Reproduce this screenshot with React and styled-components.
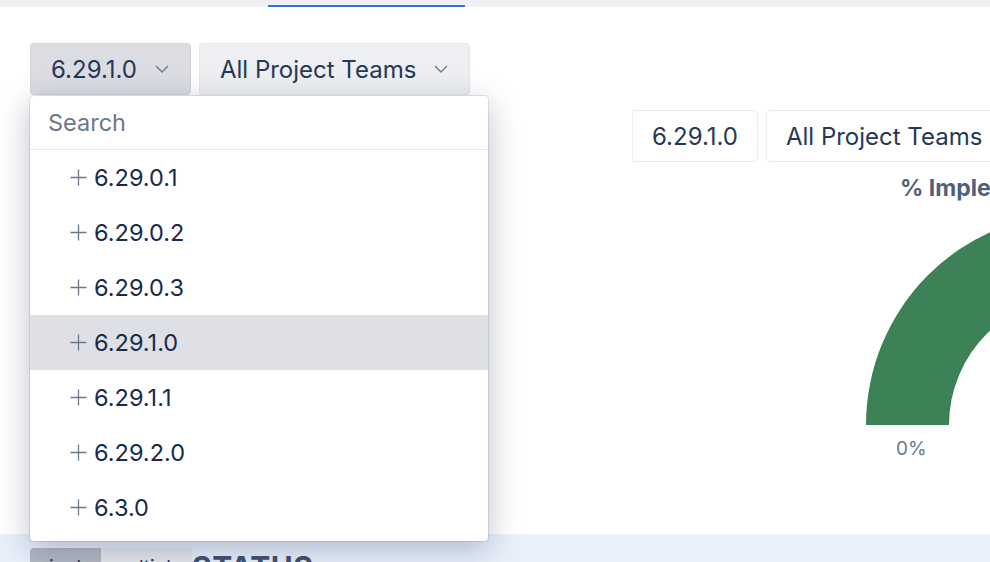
import React from "react";
import styled, { createGlobalStyle } from "styled-components";

const GlobalStyle = createGlobalStyle`
  html, body {
    margin: 0;
    padding: 0;
    background: #ffffff;
  }
  body {
    font-family: Inter, "Noto Sans", "Liberation Sans", sans-serif;
    color: #172b4d;
  }
`;

const Page = styled.div`
  width: 990px;
  height: 562px;
  overflow: hidden;
  position: relative;
  display: flex;
  flex-direction: column;
`;

const TabStrip = styled.div`
  height: 7px;
  flex: none;
  background: #f0f1f4;
  display: flex;
  align-items: flex-end;
  padding-left: 268px;
`;

const TabLine = styled.div`
  width: 197px;
  height: 2px;
  background: #2f6fe8;
`;

const Main = styled.div`
  height: 527px;
  flex: none;
  display: flex;
`;

const LeftColumn = styled.div`
  width: 632px;
  flex: none;
  padding: 36px 0 0 30px;
  box-sizing: border-box;
  position: relative;
  z-index: 2;
`;

const FilterRow = styled.div`
  display: flex;
  gap: 8px;
  position: relative;
`;

const SelectButton = styled.button`
  height: 52px;
  padding: 0 21px 0 20px;
  border: 1px solid ${(p) => (p.$open ? "#d3d5db" : "#e3e5ea")};
  border-radius: 4px;
  background: ${(p) => (p.$open ? "#dcdde2" : "#eeeff2")};
  color: #253858;
  font-family: inherit;
  font-size: 24px;
  display: flex;
  align-items: center;
  gap: 18px;
  box-sizing: border-box;
  white-space: nowrap;
`;

const Chevron = () => (
  <svg width="14" height="8" viewBox="0 0 14 8" fill="none">
    <path d="M1 1l6 6 6-6" stroke="#6b778c" strokeWidth="1.3" />
  </svg>
);

const Dropdown = styled.div`
  position: absolute;
  left: 0;
  top: 53px;
  width: 458px;
  height: 445px;
  background: #ffffff;
  border-radius: 4px;
  box-shadow: 0 0 0 1px rgba(9, 30, 66, 0.1), 0 8px 32px rgba(9, 30, 66, 0.28);
  box-sizing: border-box;
  padding-bottom: 6px;
  display: flex;
  flex-direction: column;
`;

const SearchRow = styled.div`
  height: 54px;
  flex: none;
  border-bottom: 1px solid #e6e8ec;
  box-sizing: border-box;
  padding-left: 18px;
  display: flex;
  align-items: center;
  color: #6b778c;
  font-size: 23.5px;
`;

const Item = styled.div`
  height: 55px;
  flex: none;
  display: flex;
  align-items: center;
  gap: 7px;
  padding-left: 40px;
  font-size: 23.5px;
  color: #172b4d;
  background: ${(p) => (p.$active ? "#dfe0e5" : "transparent")};
`;

const Plus = () => (
  <svg width="17" height="17" viewBox="0 0 17 17" fill="none">
    <path d="M8.5 0.5v16M0.5 8.5h16" stroke="#6b778c" strokeWidth="1.3" />
  </svg>
);

const RightColumn = styled.div`
  flex: 1;
  padding-top: 103px;
  overflow: hidden;
  position: relative;
`;

const ChipRow = styled.div`
  display: flex;
  gap: 8px;
  width: 600px;
`;

const Chip = styled.div`
  height: 52px;
  padding: 0 19px;
  border: 1px solid #ebecf0;
  border-radius: 4px;
  background: #ffffff;
  color: #253858;
  font-size: 24px;
  display: flex;
  align-items: center;
  box-sizing: border-box;
  white-space: nowrap;
`;

const ChartTitle = styled.div`
  margin: 13px 0 0 268px;
  font-size: 23px;
  font-weight: 700;
  color: #505f79;
  white-space: nowrap;
  line-height: 26px;
`;

const Gauge = styled.svg`
  display: block;
  margin: 12px 0 0 234px;
`;

const GaugeLabel = styled.div`
  margin: 12px 0 0 264px;
  font-size: 19px;
  color: #6b778c;
`;

const StatusBand = styled.div`
  flex: 1;
  background: #e9f0fb;
  padding: 14px 0 0 30px;
  display: flex;
  align-items: flex-start;
`;

const Toggle = styled.div`
  display: flex;
  border-radius: 4px;
  overflow: hidden;
`;

const ToggleButton = styled.div`
  width: ${(p) => p.$w}px;
  height: 36px;
  background: ${(p) => (p.$active ? "#b3b9c4" : "#e6e8ec")};
  color: #253858;
  font-size: 19px;
  display: flex;
  align-items: center;
  justify-content: center;
  padding-top: 2px;
  box-sizing: border-box;
`;

const StatusTitle = styled.div`
  font-size: 30px;
  font-weight: 700;
  color: #42526e;
  letter-spacing: 0.5px;
  margin-top: 1px;
`;

const versions = ["6.29.0.1", "6.29.0.2", "6.29.0.3", "6.29.1.0", "6.29.1.1", "6.29.2.0", "6.3.0"];

export default function App() {
  const R = 212;
  const r = 129;
  return (
    <Page>
      <GlobalStyle />
      <TabStrip>
        <TabLine />
      </TabStrip>
      <Main>
        <LeftColumn>
          <FilterRow>
            <SelectButton $open>
              6.29.1.0
              <Chevron />
            </SelectButton>
            <SelectButton>
              All Project Teams
              <Chevron />
            </SelectButton>
            <Dropdown>
              <SearchRow>Search</SearchRow>
              {versions.map((v) => (
                <Item key={v} $active={v === "6.29.1.0"}>
                  <Plus />
                  {v}
                </Item>
              ))}
            </Dropdown>
          </FilterRow>
        </LeftColumn>
        <RightColumn>
          <ChipRow>
            <Chip>6.29.1.0</Chip>
            <Chip>All Project Teams</Chip>
          </ChipRow>
          <ChartTitle>% Implemented</ChartTitle>
          <Gauge width={2 * R} height={R} viewBox={`0 0 ${2 * R} ${R}`}>
            <path
              d={`M0 ${R} A${R} ${R} 0 0 1 ${2 * R} ${R} L${R + r} ${R} A${r} ${r} 0 0 0 ${R - r} ${R} Z`}
              fill="#3d8157"
            />
          </Gauge>
          <GaugeLabel>0%</GaugeLabel>
        </RightColumn>
      </Main>
      <StatusBand>
        <Toggle>
          <ToggleButton $active $w={71}>single</ToggleButton>
          <ToggleButton $w={91}>multiple</ToggleButton>
        </Toggle>
        <StatusTitle>STATUS</StatusTitle>
      </StatusBand>
    </Page>
  );
}
